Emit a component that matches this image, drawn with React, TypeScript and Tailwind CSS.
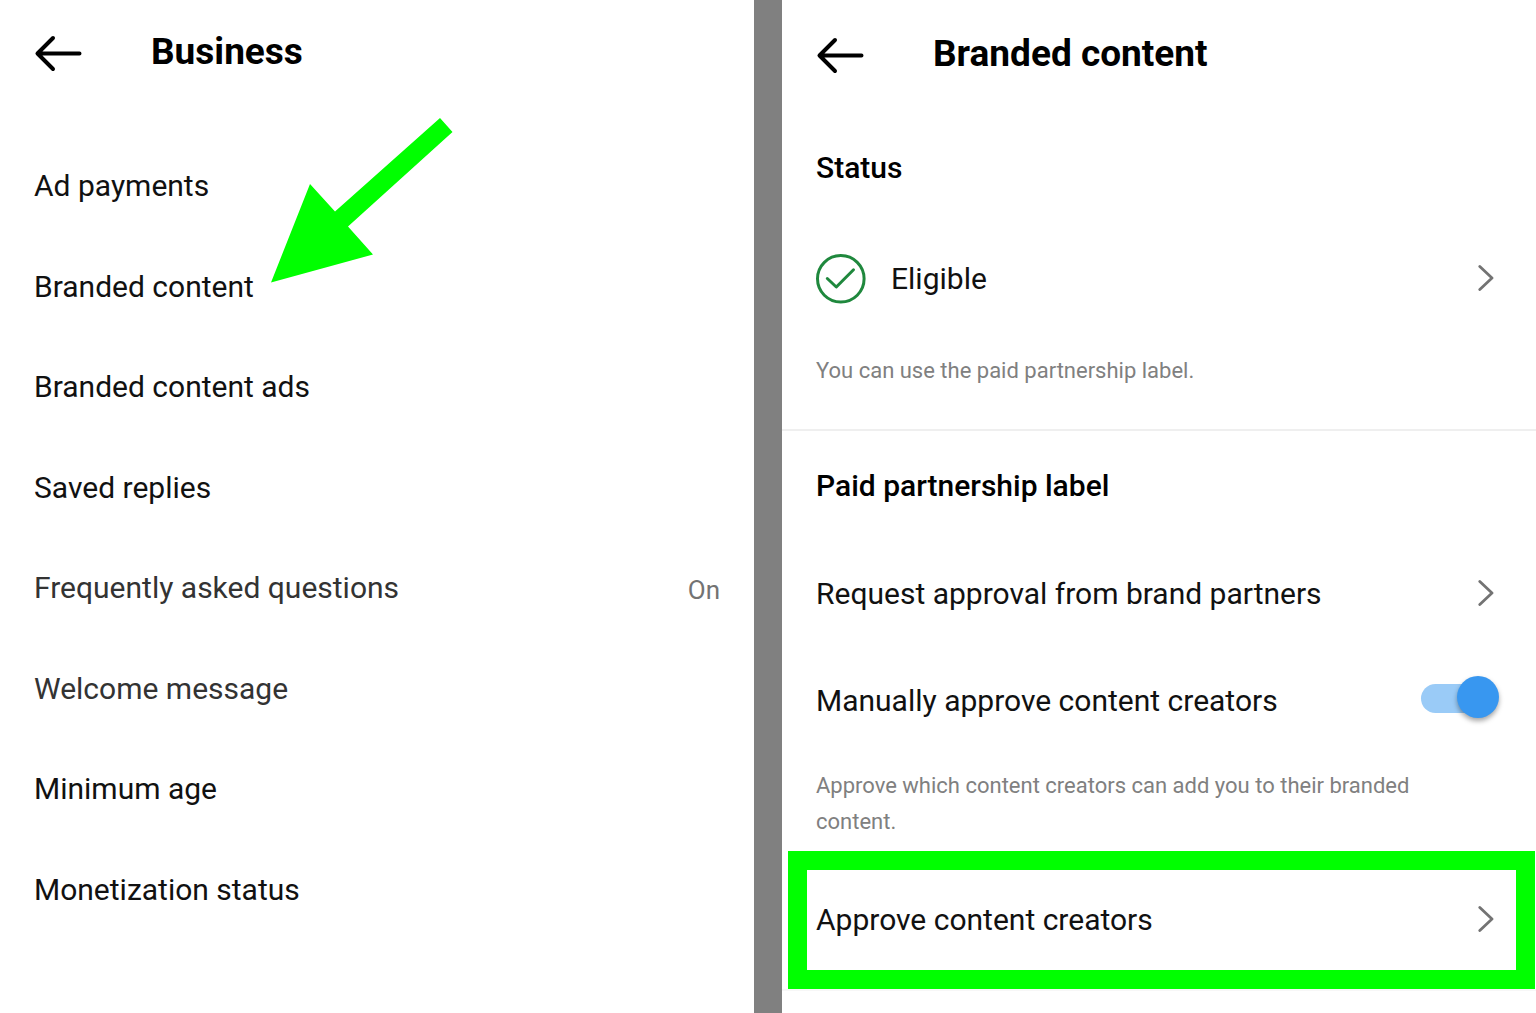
import { useState } from "react";

const businessItems = [
  { label: "Ad payments" },
  { label: "Branded content" },
  { label: "Branded content ads" },
  { label: "Saved replies" },
  { label: "Frequently asked questions", value: "On", muted: true },
  { label: "Welcome message", muted: true },
  { label: "Minimum age" },
  { label: "Monetization status" },
];

function BackButton() {
  return (
    <button type="button" aria-label="Back" className="shrink-0 cursor-pointer">
      <svg
        className="w-12 h-10"
        viewBox="0 0 48 40"
        fill="none"
        stroke="currentColor"
        strokeWidth="4"
        strokeLinecap="round"
        strokeLinejoin="round"
      >
        <path d="M45.500 21.500H3.500M19 6L3.500 21.500L19 37" />
      </svg>
    </button>
  );
}

function Chevron() {
  return (
    <svg
      className="w-4 h-7 shrink-0 text-[#737373]"
      viewBox="0 0 16 28"
      fill="none"
      stroke="currentColor"
      strokeWidth="2.8"
      strokeLinecap="round"
      strokeLinejoin="round"
      aria-hidden="true"
    >
      <path d="M1.800 1.500L14 13L1.800 24.500" />
    </svg>
  );
}

function EligibleIcon() {
  return (
    <svg
      className="w-[50px] h-[50px] shrink-0 text-[#1f883d]"
      viewBox="0 0 50 50"
      fill="none"
      stroke="currentColor"
      strokeWidth="3"
      strokeLinecap="round"
      strokeLinejoin="round"
      aria-hidden="true"
    >
      <circle cx="24.8" cy="24.8" r="23.3" />
      <path d="M11.300 24.500L20.300 33L37.500 15.800" />
    </svg>
  );
}

function PointerArrow() {
  return (
    <svg
      className="absolute left-[270px] top-[117px] w-[184px] h-[167px] pointer-events-none"
      viewBox="270 117 184 167"
      fill="#00ff00"
      aria-hidden="true"
    >
      <path d="M440 118L452.500 132L348 226.500L373 254.500L271 282.500L310 184L335 211.500Z" />
    </svg>
  );
}

function BusinessScreen() {
  return (
    <section className="relative flex-1 min-w-0">
      <header className="flex items-center gap-[69px] h-[104px] px-[34px]">
        <BackButton />
        <h1 className="text-[37px] leading-[48px] font-bold">Business</h1>
      </header>
      <ul className="mt-8 grid auto-rows-fr min-h-[804px]">
        {businessItems.map((item) => (
          <li key={item.label}>
            <a
              href="#"
              className={`flex items-center justify-between h-full px-[34px] text-[30px] leading-[36px] ${
                item.muted ? "text-[#333333]" : "text-[#111111]"
              }`}
            >
              {item.label}
              {item.value && <span className="pt-1 text-[26px] text-[#737373]">{item.value}</span>}
            </a>
          </li>
        ))}
      </ul>
      <PointerArrow />
    </section>
  );
}

function BrandedContentScreen() {
  const [manual, setManual] = useState(true);

  return (
    <section className="flex-1 min-w-0">
      <header className="flex items-center gap-[69px] h-[108px] px-[34px]">
        <BackButton />
        <h1 className="text-[37px] leading-[48px] font-bold">Branded content</h1>
      </header>

      {/* Status */}
      <div className="border-b-2 border-[#efefef] pb-10">
        <h2 className="flex items-center h-[119px] px-[34px] text-[30px] leading-[36px] font-medium">Status</h2>
        <a href="#" className="flex items-center gap-[25px] h-[104px] pl-[34px] pr-[42px] text-[30px] leading-[36px] text-[#111111]">
          <EligibleIcon />
          <span className="flex-1">Eligible</span>
          <Chevron />
        </a>
        <p className="mt-[22px] pl-[34px] pr-20 text-[22px] leading-[36px] text-[#808080]">
          You can use the paid partnership label.
        </p>
      </div>

      {/* Paid partnership label */}
      <div className="border-b-2 border-[#f7f7f7]">
        <h2 className="flex items-center h-[109px] px-[34px] text-[30px] leading-[36px] font-medium">
          Paid partnership label
        </h2>
        <a href="#" className="flex items-center justify-between h-[107px] pl-[34px] pr-[42px] text-[30px] leading-[36px] text-[#111111]">
          Request approval from brand partners
          <Chevron />
        </a>
        <label className="flex items-center justify-between h-[107px] pl-[34px] pr-[37px] text-[30px] leading-[36px] text-[#111111] cursor-pointer">
          Manually approve content creators
          <span className="relative flex items-center w-[78px] h-[42px] mb-2">
            <input
              type="checkbox"
              role="switch"
              checked={manual}
              onChange={(e) => setManual(e.target.checked)}
              className="peer appearance-none mt-1 w-[72px] h-[29px] rounded-full bg-[#c7c7c7] checked:bg-[#9acbf7] cursor-pointer"
            />
            <span className="absolute left-0 top-0 size-[42px] rounded-full bg-white peer-checked:left-9 peer-checked:bg-[#3897f0] shadow-[0_3px_5px_rgba(0,0,0,0.35)] pointer-events-none" />
          </span>
        </label>
        <p className="mt-[14px] pl-[34px] pr-20 text-[22px] leading-[36px] text-[#808080]">
          Approve which content creators can add you to their branded content.
        </p>
        <a
          href="#"
          className="mt-[11px] ml-[6px] mr-px flex items-center justify-between h-[138px] border-[19px] border-[#00ff00] pl-[9px] pr-[22px] text-[30px] leading-[36px] text-[#111111]"
        >
          Approve content creators
          <Chevron />
        </a>
      </div>
    </section>
  );
}

export default function App() {
  return (
    <main className="flex min-h-screen bg-white text-black font-['Roboto',sans-serif]">
      <BusinessScreen />
      <div className="w-7 shrink-0 bg-[#808080]" />
      <BrandedContentScreen />
    </main>
  );
}
